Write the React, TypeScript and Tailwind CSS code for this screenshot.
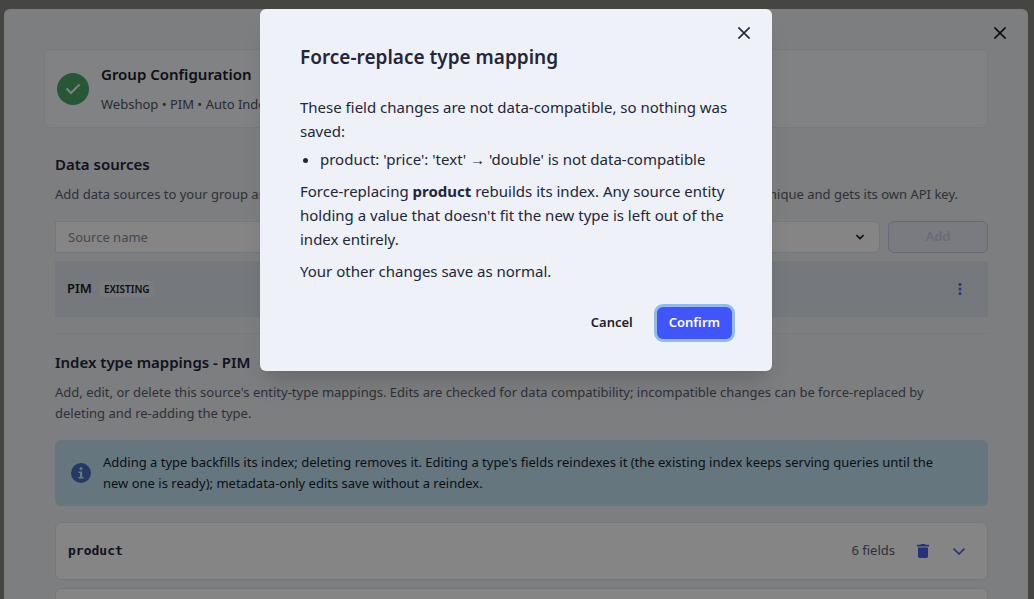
import { useState } from 'react';
import type { ReactNode } from 'react';
import { clsx } from 'clsx';

interface IconProps {
  className?: string;
}

const CloseIcon = ({ className }: IconProps) => (
  <svg viewBox="0 0 12 12" className={clsx('w-3 h-3', className)} fill="none" stroke="currentColor" strokeWidth="1.6">
    <path d="M0.4 0.4 11.6 11.6M11.6 0.4 0.4 11.6" />
  </svg>
);

const CheckIcon = () => (
  <svg viewBox="0 0 16 12" className="w-4 h-3" fill="none" stroke="currentColor" strokeWidth="2">
    <path d="M1.5 5.5 6 10 14.5 1.5" />
  </svg>
);

const InfoIcon = () => (
  <svg viewBox="0 0 20 20" className="w-5 h-5 shrink-0">
    <circle cx="10" cy="10" r="10" fill="#4670b8" />
    <circle cx="10" cy="5.6" r="1.5" fill="#cfe6f5" />
    <path d="M7.6 8.4h3.6v5.6h1.4v1.6H7.4V14H9V10H7.6z" fill="#cfe6f5" />
  </svg>
);

const DotsIcon = () => (
  <svg viewBox="0 0 4 12" className="w-1 h-3" fill="currentColor">
    <circle cx="2" cy="1.5" r="1.5" />
    <circle cx="2" cy="6" r="1.5" />
    <circle cx="2" cy="10.5" r="1.5" />
  </svg>
);

const TrashIcon = () => (
  <svg viewBox="0 0 12 14" className="w-3 h-3.5" fill="currentColor">
    <path d="M0 0.8h3.4L4.2 0h3.6l.8.8H12v1.6H0zM1 3.4h10V12.6q0 1.4-1.4 1.4H2.4Q1 14 1 12.600z" />
  </svg>
);

const ChevronIcon = ({ className }: IconProps) => (
  <svg viewBox="0 0 12 7" className={className} fill="none" stroke="currentColor">
    <path d="M0.6 0.6 6 6 11.4 0.6" />
  </svg>
);

const SectionHeader = ({ title, children }: { title: string; children: ReactNode }) => (
  <div className="flex flex-col gap-2">
    <h2 className="text-[15px] leading-6 font-semibold text-[#23263a]">{title}</h2>
    <p className="pr-[30px] text-[13px] leading-[21px] text-[#5a5e6e]">{children}</p>
  </div>
);

const MappingCard = ({ name, fields }: { name?: string; fields?: number }) => (
  <div className="flex items-center h-[58px] px-3 rounded-md bg-white border border-[#dfe4ee]">
    {name && (
      <>
        <span className="font-['DejaVu_Sans_Mono',monospace] text-[13px] font-bold text-[#23263a]">{name}</span>
        <span className="ml-auto text-[13px] text-[#5a5e6e]">{fields} fields</span>
        <button aria-label={`Delete ${name}`} className="ml-4 w-6 h-6 flex items-center justify-center text-[#4a5fee]">
          <TrashIcon />
        </button>
        <button aria-label={`Expand ${name}`} className="ml-3 mr-1 w-6 h-6 flex items-center justify-center text-[#4a5fee]">
          <ChevronIcon className="w-3 h-[7px] stroke-[1.6]" />
        </button>
      </>
    )}
  </div>
);

const GroupPanel = () => {
  const [sourceName, setSourceName] = useState('');

  return (
    <main className="relative w-full max-w-5xl mx-auto p-10 rounded-md bg-[#eef1f6]">
      <button aria-label="Close panel" className="absolute top-3 right-4 w-6 h-6 flex items-center justify-center text-[#1b1d29]">
        <CloseIcon />
      </button>

      {/* SUMMARY */}
      <header className="flex items-center gap-3 p-3 rounded-md border border-[#e6e9ef] bg-[#f8fafb]">
        <span className="w-8 h-8 rounded-full bg-[#4ba867] text-[#f4f8f5] flex items-center justify-center">
          <CheckIcon />
        </span>
        <div className="flex flex-col gap-2">
          <h1 className="text-[15px] leading-6 font-semibold text-[#1b1d29]">Group Configuration</h1>
          <p className="text-[13px] leading-[21px] text-[#4f5362]">Webshop • PIM • Auto Index</p>
        </div>
      </header>

      <div className="ml-[11px] mt-6 flex flex-col gap-4">
        {/* DATA SOURCES */}
        <section className="flex flex-col gap-4">
          <SectionHeader title="Data sources">
            <span className="flex justify-between whitespace-nowrap">
              <span>Add data sources to your group and</span>
              <span>unique and gets its own API key.</span>
            </span>
          </SectionHeader>
          <div className="flex flex-col gap-2">
            <form className="flex gap-2">
              <input
                aria-label="Source name"
                placeholder="Source name"
                value={sourceName}
                onChange={(e) => setSourceName(e.target.value)}
                className="flex-1 min-w-0 h-8 px-3 text-[13px] bg-white border border-[#dbe3f0] placeholder:text-[#858a9a]"
              />
              <div className="relative flex-1 min-w-0">
                <select aria-label="Source type" className="w-full h-8 appearance-none rounded-md bg-white border border-[#dbe3f0]" />
                <ChevronIcon className="absolute right-4 top-[13px] w-2 h-1.5 stroke-[2.4] text-[#1b1d29] pointer-events-none" />
              </div>
              <button
                type="button"
                disabled
                className="w-[100px] h-8 rounded-md border border-[#c6caeb] bg-[#e9ecf5] text-[13px] font-semibold text-[#c8ccea]"
              >
                Add
              </button>
            </form>
            <div className="flex items-center h-14 px-3 bg-[#e0e6ed]">
              <span className="text-[13px] font-semibold text-[#1b1d29]">PIM</span>
              <span className="ml-2 px-1 text-[10px] leading-4 font-semibold rounded-xs bg-[#eaedf3] text-[#1b1d29]">EXISTING</span>
              <button aria-label="Source actions" className="ml-auto mr-1 w-6 h-6 flex items-center justify-center text-[#4a5fee]">
                <DotsIcon />
              </button>
            </div>
          </div>
        </section>

        <hr className="border-[#e6e9ef]" />

        {/* INDEX TYPE MAPPINGS */}
        <section className="flex flex-col gap-4">
          <SectionHeader title="Index type mappings - PIM">
            Add, edit, or delete this source's entity-type mappings. Edits are checked for data compatibility; incompatible
            changes can be force-replaced by deleting and re-adding the type.
          </SectionHeader>
          <div className="flex items-center gap-3 pl-4 pr-8 py-3 rounded-md bg-[#c2e2f3] text-[#1b1d29]">
            <InfoIcon />
            <p className="text-[13px] leading-[21px]">
              Adding a type backfills its index; deleting removes it. Editing a type's fields reindexes it (the existing
              index keeps serving queries until the new one is ready); metadata-only edits save without a reindex.
            </p>
          </div>
          <div className="flex flex-col gap-2">
            <MappingCard name="product" fields={6} />
            <MappingCard />
          </div>
        </section>
      </div>
    </main>
  );
};

const ConfirmDialog = () => (
  <div
    role="dialog"
    aria-modal="true"
    aria-labelledby="dialog-title"
    className="relative w-full max-w-lg px-10 py-8 rounded-md bg-[#eef1f7] text-[#23263a] shadow-xl"
  >
    <button aria-label="Close dialog" className="absolute top-3 right-4 w-6 h-6 flex items-center justify-center">
      <CloseIcon />
    </button>
    <h2 id="dialog-title" className="text-[19px] leading-8 font-semibold">
      Force-replace type mapping
    </h2>
    <div className="mt-[22px] flex flex-col gap-2 text-[15px] leading-6">
      <div className="flex flex-col gap-1">
        <p>These field changes are not data-compatible, so nothing was saved:</p>
        <ul className="list-disc pl-5">
          <li>product: 'price': 'text' → 'double' is not data-compatible</li>
        </ul>
      </div>
      <p>
        Force-replacing <strong className="font-bold">product</strong> rebuilds its index. Any source entity holding a value
        that doesn't fit the new type is left out of the index entirely.
      </p>
      <p>Your other changes save as normal.</p>
    </div>
    <div className="mt-6 flex justify-end gap-3 text-[13px] font-semibold">
      <button className="h-8 px-3 text-[#1b1d29]">Cancel</button>
      <button className="h-8 px-3 rounded-md bg-[#4055fb] text-white ring-3 ring-[#93bbea]">Confirm</button>
    </div>
  </div>
);

const App = () => (
  <div className="relative h-screen overflow-hidden bg-[#84877f] font-['Noto_Sans',sans-serif]">
    <div className="pt-[9px] pr-0.5">
      <GroupPanel />
    </div>
    <div className="absolute inset-0 bg-black/48 flex items-start justify-center pt-[9px] pr-0.5">
      <ConfirmDialog />
    </div>
  </div>
);

export default App;
